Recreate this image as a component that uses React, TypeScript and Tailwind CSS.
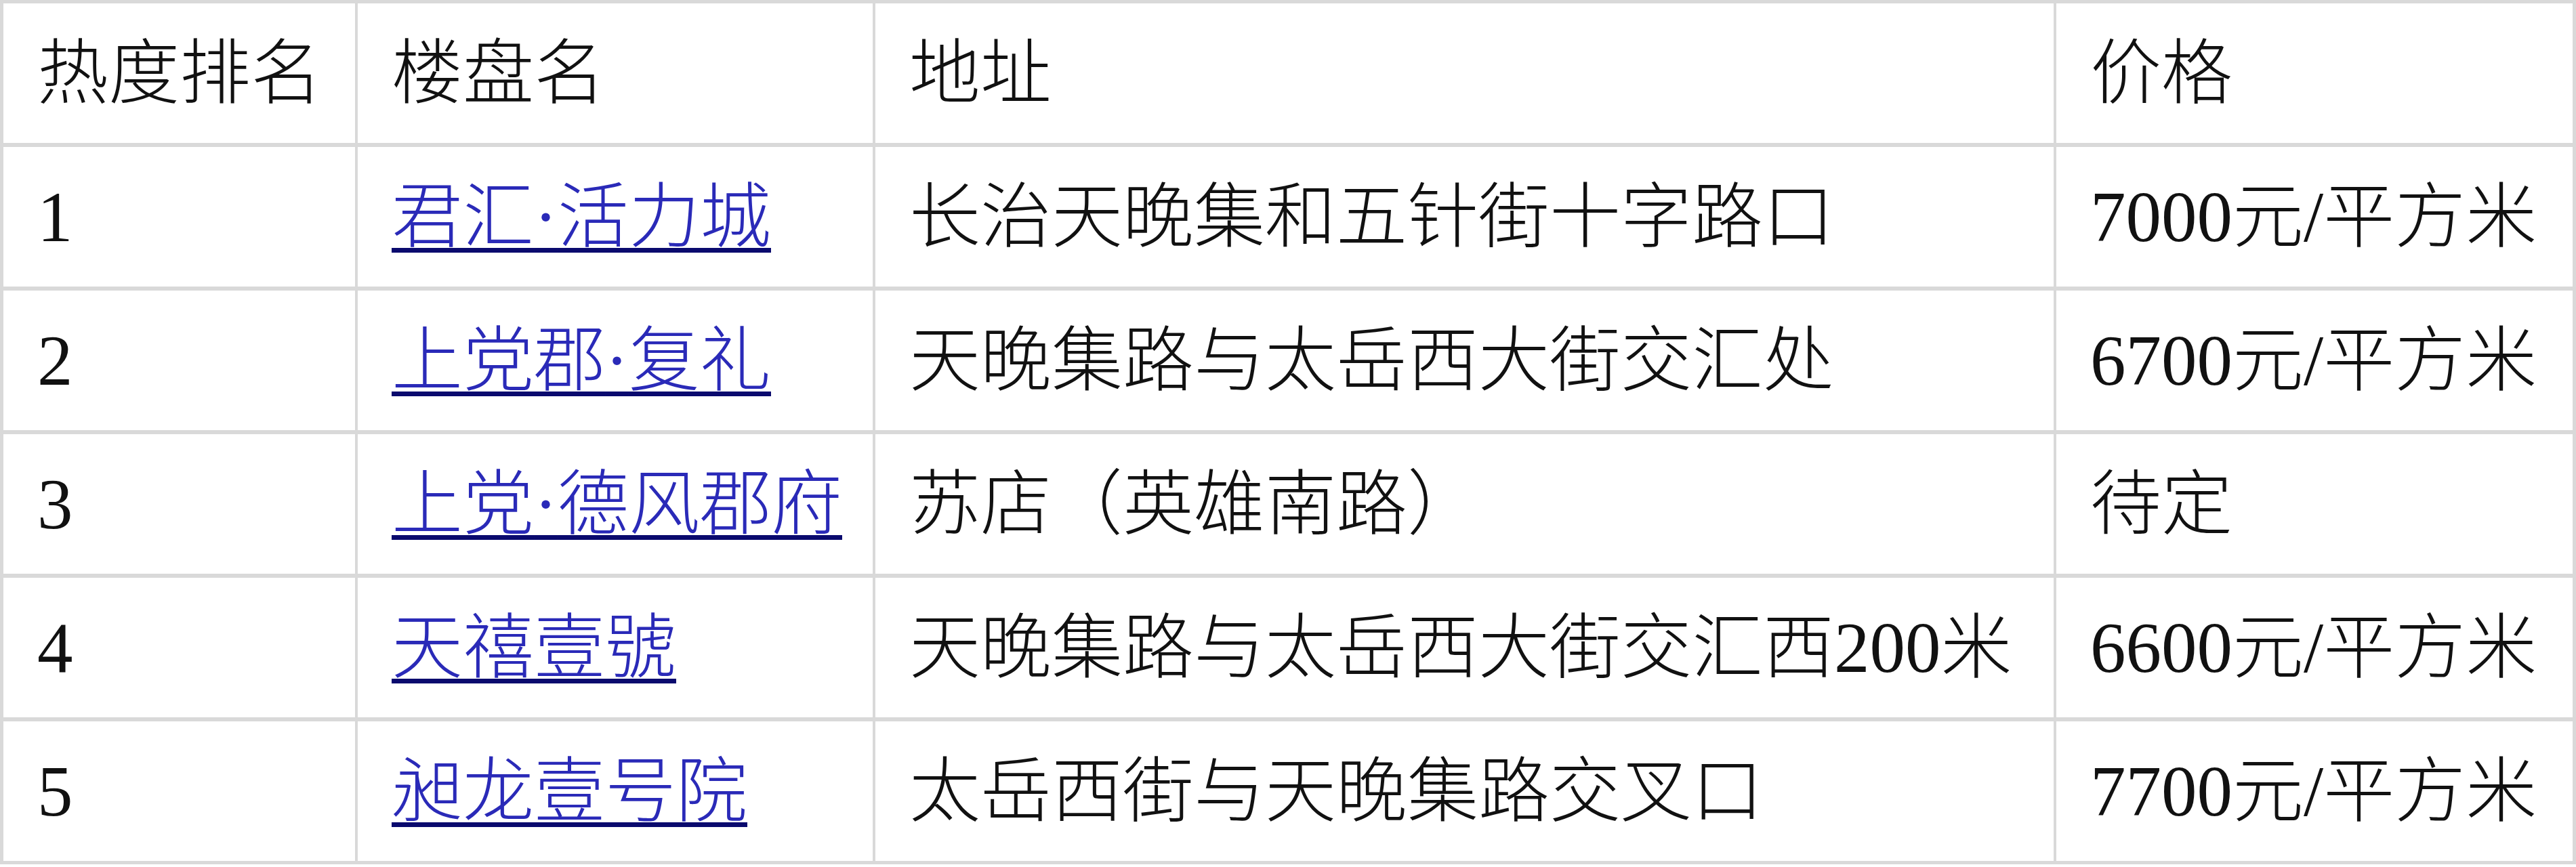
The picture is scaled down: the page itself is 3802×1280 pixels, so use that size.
import React from "react";

type Row = { rank: string; name: string; addr: string; price: string };

const rows: Row[] = [
  { rank: "1", name: "君汇·活力城", addr: "长治天晚集和五针街十字路口", price: "7000元/平方米" },
  { rank: "2", name: "上党郡·复礼", addr: "天晚集路与太岳西大街交汇处", price: "6700元/平方米" },
  { rank: "3", name: "上党·德风郡府", addr: "苏店（英雄南路）", price: "待定" },
  { rank: "4", name: "天禧壹號", addr: "天晚集路与太岳西大街交汇西200米", price: "6600元/平方米" },
  { rank: "5", name: "昶龙壹号院", addr: "太岳西街与天晚集路交叉口", price: "7700元/平方米" },
];

function Mixed({ text }: { text: string }) {
  const parts = text.split(/([0-9/·]+)/).filter((p) => p.length > 0);
  return (
    <>
      {parts.map((p, i) =>
        /^[0-9/·]+$/.test(p) ? (
          <span key={i} className="font-['Liberation_Serif',serif]">
            {p}
          </span>
        ) : (
          <span key={i}>{p}</span>
        )
      )}
    </>
  );
}

function Cell({ children }: { children: React.ReactNode }) {
  return (
    <div className="bg-white h-[206px] flex items-center pl-[50px] whitespace-nowrap overflow-hidden">
      {children}
    </div>
  );
}

export default function App() {
  return (
    <div className="w-[3802px] h-[1280px] bg-white">
      <div className="grid grid-cols-[519px_760px_1739px_762px] gap-x-[4px] gap-y-[6px] bg-[#d9d9d9] p-[5px] text-[105px] leading-none text-[#111] font-light font-['Liberation_Serif','Noto_Sans_CJK_SC',serif]">
        <Cell>热度排名</Cell>
        <Cell>楼盘名</Cell>
        <Cell>地址</Cell>
        <Cell>价格</Cell>
        {rows.map((r) => (
          <React.Fragment key={r.rank}>
            <Cell>
              <Mixed text={r.rank} />
            </Cell>
            <Cell>
              <a
                href="#"
                className="text-[#2a2ab8] underline decoration-[#0a0a6e] decoration-[7px] underline-offset-[10px]"
              >
                <Mixed text={r.name} />
              </a>
            </Cell>
            <Cell>
              <Mixed text={r.addr} />
            </Cell>
            <Cell>
              <Mixed text={r.price} />
            </Cell>
          </React.Fragment>
        ))}
      </div>
    </div>
  );
}
